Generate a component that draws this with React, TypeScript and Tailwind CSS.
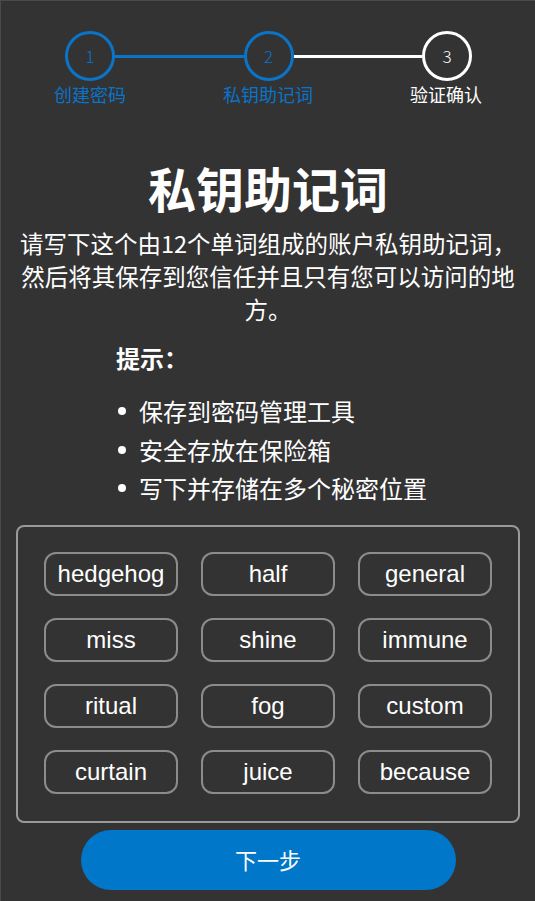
import React from "react";

const words = [
  "hedgehog", "half", "general",
  "miss", "shine", "immune",
  "ritual", "fog", "custom",
  "curtain", "juice", "because",
];

const tips = ["保存到密码管理工具", "安全存放在保险箱", "写下并存储在多个秘密位置"];

const cjk = { fontFamily: '"Noto Sans CJK SC", "Noto Sans", sans-serif' };
const latin = { fontFamily: '"Liberation Sans", Arial, sans-serif' };

function Step({ n, active }: { n: number; active: boolean }) {
  return (
    <div
      className={`flex h-[50px] w-[50px] shrink-0 items-center justify-center rounded-full border-[3px] text-[17px] font-light ${
        active ? "border-[#0a74c9] text-[#0a74c9]" : "border-white text-white"
      }`}
    >
      {n}
    </div>
  );
}

export default function App() {
  return (
    <div
      className="min-h-screen w-full border-l border-t border-[#4a4a4a] bg-[#333333] text-white"
      style={cjk}
    >
      {/* stepper */}
      <div className="flex items-center pt-[30px]">
        <div className="w-[64px] shrink-0" />
        <Step n={1} active />
        <div className="h-[3px] flex-1 bg-[#0a74c9]" />
        <Step n={2} active />
        <div className="h-[3px] flex-1 bg-white" />
        <Step n={3} active={false} />
        <div className="w-[63px] shrink-0" />
      </div>
      <div className="mt-[2px] grid grid-cols-3 text-center text-[18px] leading-[22px]">
        <span className="text-[#0a74c9]">创建密码</span>
        <span className="text-[#0a74c9]">私钥助记词</span>
        <span className="text-white">验证确认</span>
      </div>

      <h1 className="mt-[54px] text-center text-[48px] font-bold leading-[56px]">私钥助记词</h1>
      <p className="mt-[12px] px-[14px] text-center text-[23.5px] leading-[33px]">
        请写下这个由12个单词组成的账户私钥助记词，然后将其保存到您信任并且只有您可以访问的地方。
      </p>

      <div className="mx-auto mt-[16px] w-fit pl-[7px]">
        <h2 className="text-[24px] font-bold leading-[32px]">提示：</h2>
        <ul className="mt-[18px] text-[24px] leading-[38.5px]">
          {tips.map((t) => (
            <li key={t} className="flex items-center">
              <span className="mr-[13px] ml-[2px] h-[8px] w-[8px] rounded-full bg-white" />
              {t}
            </li>
          ))}
        </ul>
      </div>

      <div className="mx-[15px] mt-[17px] rounded-[8px] border-2 border-[#9a9a9a] pt-[25px] pb-[27px]">
        <div className="grid grid-cols-[repeat(3,134px)] justify-center gap-x-[23px] gap-y-[22px]">
          {words.map((w) => (
            <div
              key={w}
              className="flex h-[44px] items-center justify-center rounded-[12px] border-2 border-[#8c8c8c] text-[24px]"
              style={latin}
            >
              {w}
            </div>
          ))}
        </div>
      </div>

      <div className="flex justify-center pt-[7px] pb-[10px]">
        <button className="h-[60px] w-[375px] rounded-full bg-[#0077c8] text-[22px] text-white">
          下一步
        </button>
      </div>
    </div>
  );
}
